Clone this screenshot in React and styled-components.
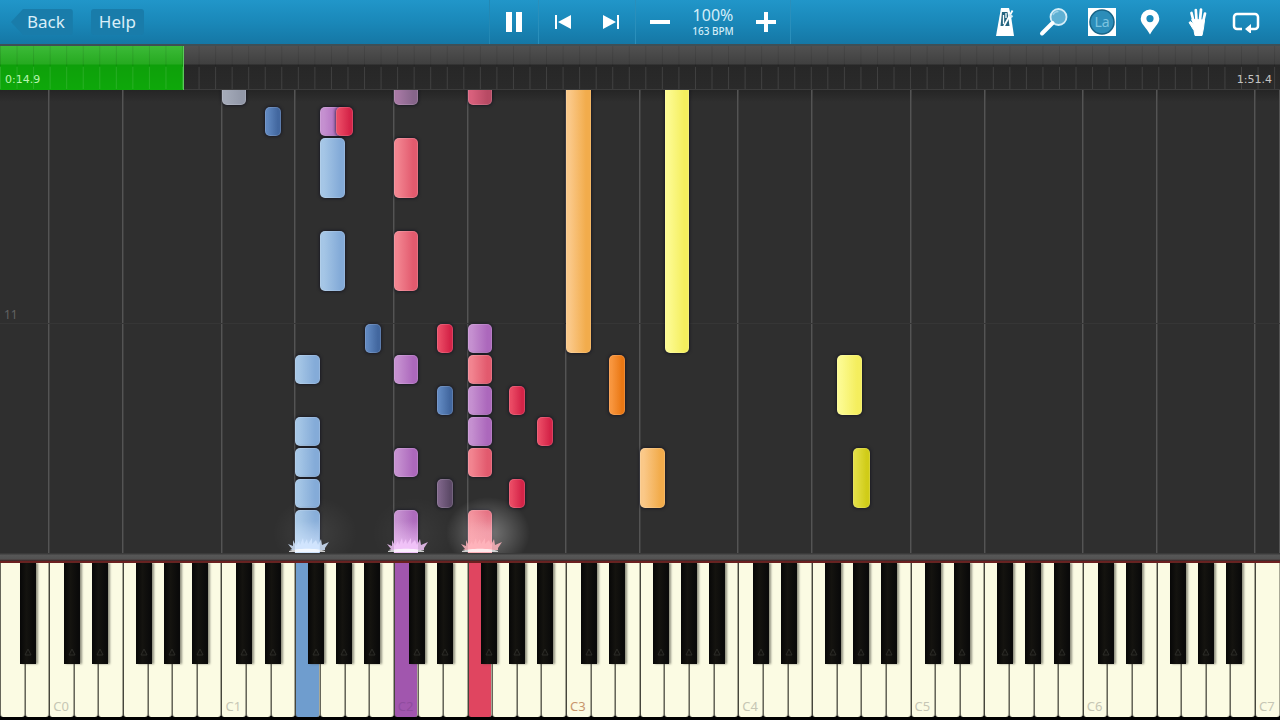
import styled, { createGlobalStyle, css } from 'styled-components';

const WHITE_KEYS = 52;
const STEP = 31;
const LEAD = 45;

// left edge of each note, in white key widths from the C of its octave
const pitchOffset = {
  C: 0,
  'C#': 0.6,
  D: 1,
  'D#': 1.75,
  E: 2,
  F: 3,
  'F#': 3.53,
  G: 4,
  'G#': 4.67,
  A: 5,
  'A#': 5.81,
  B: 6,
};

const noteColors = {
  blue: ['#a5c6e6', '#84abd8'],
  darkblue: ['#6088c0', '#42679f'],
  gray: ['#a3a9b8', '#9298a8'],
  purple: ['#c590d0', '#ac68bc'],
  mauve: ['#a678a4', '#86658a'],
  plum: ['#7d6488', '#5d4a68'],
  pink: ['#f28490', '#e25a6e'],
  rose: ['#d8607c', '#b84a64'],
  red: ['#ea4a64', '#d42448'],
  orange: ['#fac888', '#f2ac4c'],
  darkorange: ['#f8963e', '#ea7814'],
  yellow: ['#fcfa90', '#f4ee5e'],
  olive: ['#e2de44', '#d0cc18'],
};

const notes = [
  { pitch: 'C1', step: 13, length: 1, color: 'gray' },
  { pitch: 'C2', step: 13, length: 1, color: 'mauve' },
  { pitch: 'F2', step: 13, length: 1, color: 'rose' },
  { pitch: 'D#1', step: 12, length: 1, color: 'darkblue' },
  { pitch: 'G1', step: 12, length: 1, color: 'purple' },
  { pitch: 'G#1', step: 12, length: 1, color: 'red' },
  { pitch: 'G1', step: 10, length: 2, color: 'blue' },
  { pitch: 'C2', step: 10, length: 2, color: 'pink' },
  { pitch: 'G1', step: 7, length: 2, color: 'blue' },
  { pitch: 'C2', step: 7, length: 2, color: 'pink' },
  { pitch: 'C3', step: 5, length: 12, color: 'orange' },
  { pitch: 'G3', step: 5, length: 12, color: 'yellow' },
  { pitch: 'A#1', step: 5, length: 1, color: 'darkblue' },
  { pitch: 'D#2', step: 5, length: 1, color: 'red' },
  { pitch: 'F2', step: 5, length: 1, color: 'purple' },
  { pitch: 'F1', step: 4, length: 1, color: 'blue' },
  { pitch: 'C2', step: 4, length: 1, color: 'purple' },
  { pitch: 'F2', step: 4, length: 1, color: 'pink' },
  { pitch: 'D#3', step: 3, length: 2, color: 'darkorange' },
  { pitch: 'G4', step: 3, length: 2, color: 'yellow' },
  { pitch: 'D#2', step: 3, length: 1, color: 'darkblue' },
  { pitch: 'F2', step: 3, length: 1, color: 'purple' },
  { pitch: 'G#2', step: 3, length: 1, color: 'red' },
  { pitch: 'F1', step: 2, length: 1, color: 'blue' },
  { pitch: 'F2', step: 2, length: 1, color: 'purple' },
  { pitch: 'A#2', step: 2, length: 1, color: 'red' },
  { pitch: 'F1', step: 1, length: 1, color: 'blue' },
  { pitch: 'C2', step: 1, length: 1, color: 'purple' },
  { pitch: 'F2', step: 1, length: 1, color: 'pink' },
  { pitch: 'F3', step: 0, length: 2, color: 'orange' },
  { pitch: 'G#4', step: 0, length: 2, color: 'olive' },
  { pitch: 'F1', step: 0, length: 1, color: 'blue' },
  { pitch: 'D#2', step: 0, length: 1, color: 'plum' },
  { pitch: 'G#2', step: 0, length: 1, color: 'red' },
  { pitch: 'F1', step: -2, length: 2, color: 'blue' },
  { pitch: 'C2', step: -2, length: 2, color: 'purple' },
  { pitch: 'F2', step: -2, length: 2, color: 'pink' },
];

const pressed = { F1: '#6f9dce', C2: '#a156ae', F2: '#e04560' };

const sparks = [
  { pitch: 'F1', color: '#d3e6ff', glow: 0.08 },
  { pitch: 'C2', color: '#f3c6fa', glow: 0.05 },
  { pitch: 'F2', color: '#ffb4bc', glow: 0.36 },
];

// A and B before the first C, then seven octaves, then the last C
const whiteKeys = ['A-1', 'B-1'];
for (let octave = 0; octave < 7; octave++) {
  for (const name of 'CDEFGAB') whiteKeys.push(name + octave);
}
whiteKeys.push('C7');

// guide lines fall on every C and F
const lanes = [2];
for (let octave = 0; octave < 7; octave++) lanes.push(3, 4);
lanes.push(1);

const splitPitch = (pitch) => {
  const [, name, octave] = pitch.match(/^([A-G]#?)(-?\d)$/);
  return { name, octave: Number(octave) };
};

const keyPercent = (pitch) => {
  const { name, octave } = splitPitch(pitch);
  return ((2 + octave * 7 + pitchOffset[name]) / WHITE_KEYS) * 100;
};

const labelColor = ({ $middle, $pressed }) => {
  if ($pressed) return '#8f4c9e';
  return $middle ? '#c8966c' : '#c6c6b4';
};

const GlobalStyle = createGlobalStyle`
  * {
    box-sizing: border-box;
  }
  body {
    margin: 0;
    background: #000;
    font-family: 'Noto Sans', 'Open Sans', sans-serif;
  }
  button {
    margin: 0;
    padding: 0;
    border: none;
    background: none;
    font: inherit;
    color: inherit;
    cursor: pointer;
  }
`;

const Page = styled.div`
  display: flex;
  flex-direction: column;
  height: 100vh;
  overflow: hidden;
`;

const Toolbar = styled.header`
  display: grid;
  grid-template-columns: 1fr auto 1fr;
  height: 44px;
  flex-shrink: 0;
  color: #fff;
  background: linear-gradient(#2196c9, #1a88b9 50%, #1577a5);
`;

const MenuGroup = styled.nav`
  display: flex;
  align-items: center;
  gap: 18px;
  padding-left: 11px;
`;

const MenuButton = styled.button`
  height: 26px;
  padding: 0 8px;
  border-radius: 3px;
  font-size: 17px;
  line-height: 26px;
  color: #d9eef8;
  background: #197caa;
  ${(props) =>
    props.$back &&
    css`
      padding-left: 16px;
      clip-path: polygon(0 50%, 12px 0, 100% 0, 100% 100%, 12px 100%);
    `}
`;

const Transport = styled.div`
  display: flex;
  border-left: 1px solid #2388b4;
`;

const TransportGroup = styled.div`
  display: flex;
  align-items: center;
  border-right: 1px solid #2a8fbb;
`;

const IconButton = styled.button`
  display: flex;
  align-items: center;
  justify-content: center;
  width: 48px;
  height: 44px;
`;

const Tempo = styled.div`
  display: flex;
  flex-direction: column;
  width: 58px;
  text-align: center;
  color: #d3edf8;
`;

const TempoPercent = styled.div`
  font-size: 16px;
  line-height: 22px;
  margin-top: -4px;
`;

const TempoBpm = styled.div`
  font-size: 10px;
  line-height: 10px;
  font-weight: 500;
`;

const Tools = styled.div`
  display: flex;
  justify-content: flex-end;
  padding-right: 10px;
`;

const Timeline = styled.div`
  position: relative;
  display: flex;
  justify-content: space-between;
  align-items: flex-end;
  height: 46px;
  flex-shrink: 0;
  padding: 0 8px 2px 5px;
  border-top: 2px solid #3f4f55;
  border-bottom: 1px solid #3c3c3c;
  background: linear-gradient(#515151, #404040 18px, #272727 19px, #2a2a2a);
`;

const Progress = styled.div`
  position: absolute;
  inset: 0 auto -1px 0;
  border-right: 1px solid #5cc85c;
  background: linear-gradient(#3cba38, #26aa20 18px, #0ea00a 19px, #0ea80a);
`;

const Measures = styled.div`
  position: absolute;
  inset: 0;
  background:
    linear-gradient(90deg, rgba(255, 255, 255, 0.11) 1px, transparent 1px) 0 100% / calc(100% / 77.3) 22px repeat-x,
    linear-gradient(90deg, rgba(0, 0, 0, 0.1) 1px, transparent 1px) 0 0 / calc(100% / 77.3) 20px repeat-x;
`;

const Time = styled.span`
  position: relative;
  font-family: 'DejaVu Sans', sans-serif;
  font-size: 11px;
  line-height: 14px;
  color: ${(props) => props.$color};
`;

const Roll = styled.main`
  position: relative;
  display: flex;
  flex: 1;
  min-height: 0;
  overflow: hidden;
  background: linear-gradient(#252525, #2f2f2f 12px);
`;

const Lane = styled.div`
  flex: ${(props) => props.$keys} 0 0;
  box-shadow:
    inset -1px 0 0 #545454,
    1px 0 0 #3f3f3f;
`;

const BarLine = styled.div`
  position: absolute;
  left: 0;
  right: 0;
  bottom: 229px;
  padding-left: 4px;
  border-bottom: 1px solid #363636;
  font-size: 12px;
  line-height: 16px;
  color: #626262;
`;

const Note = styled.div`
  position: absolute;
  width: calc(100% / 52 * ${(props) => (props.$sharp ? 0.66 : 1)});
  border-radius: ${(props) => (props.$held ? '5px 5px 0 0' : '5px')};
  border: 1px solid rgba(255, 255, 255, 0.14);
  background: linear-gradient(
    90deg,
    ${(props) => noteColors[props.$color][0]} 15%,
    ${(props) => noteColors[props.$color][1]} 80%
  );
  background-origin: border-box;
  box-shadow: 0 0 3px 1px rgba(15, 15, 30, 0.6);
`;

const Spark = styled.svg`
  position: absolute;
  bottom: 0;
  width: 100px;
  height: 70px;
  margin-left: -38px;
`;

const Rail = styled.div`
  height: 8px;
  flex-shrink: 0;
  background: linear-gradient(#3a3a3a 1px, #575757 2px, #525252 6px, #3b2020);
`;

const Keyboard = styled.div`
  display: flex;
  height: 159px;
  flex-shrink: 0;
  padding-bottom: 3px;
  border-top: 2px solid #6c2020;
  background: #000;
`;

const KeySlot = styled.div`
  position: relative;
  flex: 1 0 0;
  min-width: 0;
`;

const WhiteKey = styled.button`
  display: flex;
  align-items: flex-end;
  width: 100%;
  height: 100%;
  padding: 0 0 2px 3px;
  border-left: 1px solid ${(props) => (props.$guide ? '#45453c' : '#66665a')};
  border-right: 1px solid #a8a896;
  border-radius: 0 0 3px 3px;
  font-size: 13px;
  line-height: 18px;
  color: ${labelColor};
  background: ${(props) => props.$pressed || '#fbfbe3'};
`;

const BlackKey = styled.button`
  display: flex;
  align-items: flex-end;
  justify-content: center;
  position: absolute;
  z-index: 1;
  top: 0;
  left: ${(props) => props.$left}%;
  width: 65%;
  height: 101px;
  padding-bottom: 8px;
  background: linear-gradient(90deg, #070707, #14130f 40%, #0a0a0a 90%);
  box-shadow: 2px 0 2px rgba(60, 60, 50, 0.55);
`;

function KeyMark() {
  return (
    <svg width="8" height="8" viewBox="0 0 8 8" fill="none" stroke="#2c2c28">
      <path d="M4 1l3 6H1z" />
    </svg>
  );
}

function PauseIcon() {
  return (
    <svg width="18" height="20" viewBox="0 0 18 20" fill="#fff">
      <path d="M1 0h6v20H1zM11 0h6v20h-6z" />
    </svg>
  );
}

function SkipIcon({ forward }) {
  return (
    <svg width="18" height="14" viewBox="0 0 18 14" fill="#fff">
      <path d={forward ? 'M1 0l13 7-13 7zM15 0h2v14h-2z' : 'M17 0L4 7l13 7zM1 0h2v14H1z'} />
    </svg>
  );
}

function MinusIcon() {
  return (
    <svg width="20" height="20" viewBox="0 0 20 20" fill="#fff">
      <path d="M0 8h20v4H0z" />
    </svg>
  );
}

function PlusIcon() {
  return (
    <svg width="20" height="20" viewBox="0 0 20 20" fill="#fff">
      <path d="M8 0h4v8h8v4h-8v8H8v-8H0V8h8z" />
    </svg>
  );
}

function MetronomeIcon() {
  return (
    <svg width="22" height="30" viewBox="0 0 22 30">
      <path d="M6 1h8l2 8 3 20H1z" fill="#fff" />
      <path d="M7 5h5.500l2 14H5.500z" fill="#25647f" />
      <path d="M8.500 8v9M11 6v5" stroke="#fff" strokeWidth="1.300" />
      <path d="M9 19L17.500 3.500" stroke="#fff" strokeWidth="1.800" />
      <path d="M13.500 7.500l4 2.500" stroke="#d8eef7" strokeWidth="2.500" />
    </svg>
  );
}

function MagnifierIcon() {
  return (
    <svg width="30" height="30" viewBox="0 0 30 30">
      <circle cx="19.500" cy="10" r="8" fill="#5fb0d3" stroke="#d5edf7" strokeWidth="1.800" />
      <path d="M13.500 16L3 26.500" stroke="#fff" strokeWidth="4" strokeLinecap="round" />
      <path d="M14 8c1-2.500 3-3.500 5.500-3.500" fill="none" stroke="#9dd2e8" strokeWidth="1.500" />
    </svg>
  );
}

function NoteNamesIcon() {
  return (
    <svg width="30" height="30" viewBox="0 0 30 30">
      <path d="M1 1h28v28H1z" fill="#fff" />
      <circle cx="15" cy="15" r="12" fill="#2c8db9" stroke="#176487" strokeWidth="1.500" />
      <text x="15" y="20" textAnchor="middle" fontSize="14" fill="#7cc4e0">
        La
      </text>
    </svg>
  );
}

function PinIcon() {
  return (
    <svg width="22" height="28" viewBox="0 0 22 28">
      <path
        d="M11 1.500a9.300 9.300 0 0 1 9.300 9.300c0 5.200-6 9.200-9.300 15.700C7.700 20 1.700 16 1.700 10.800A9.300 9.300 0 0 1 11 1.500zM11 7a3.600 3.600 0 1 0 0 7.200A3.600 3.600 0 0 0 11 7z"
        fill="#fff"
        fillRule="evenodd"
      />
    </svg>
  );
}

function HandIcon() {
  return (
    <svg width="24" height="30" viewBox="0 0 24 30" fill="none" stroke="#fff" strokeLinecap="round">
      <path d="M7.500 14L5.500 6M10.500 13L9.800 3M14 13l1-10.500M17 15l2-8.500" strokeWidth="2.700" />
      <path
        d="M6 12.500l12.500 0.500-1 8-1.500 7.500H9l-1-5-5-8 1.500-1 3 3z"
        fill="#fff"
        strokeWidth="1"
        strokeLinejoin="round"
      />
    </svg>
  );
}

function LoopIcon() {
  return (
    <svg width="28" height="22" viewBox="0 0 28 22">
      <path
        d="M10 18H5a3 3 0 0 1-3-3V6a3 3 0 0 1 3-3h18a3 3 0 0 1 3 3v9a3 3 0 0 1-3 3h-4"
        fill="none"
        stroke="#fff"
        strokeWidth="2.500"
      />
      <path d="M13 18l6-5v10z" fill="#fff" />
    </svg>
  );
}

const tools = [
  { label: 'Metronome', icon: MetronomeIcon },
  { label: 'Zoom', icon: MagnifierIcon },
  { label: 'Note names', icon: NoteNamesIcon },
  { label: 'Bookmark', icon: PinIcon },
  { label: 'Hands', icon: HandIcon },
  { label: 'Loop', icon: LoopIcon },
];

function KeySpark({ pitch, color, glow }) {
  return (
    <Spark viewBox="0 0 100 70" style={{ left: `${keyPercent(pitch)}%` }}>
      <defs>
        <radialGradient id={`glow-${pitch}`}>
          <stop offset="0" stopColor="#fff" stopOpacity={glow} />
          <stop offset="1" stopColor="#fff" stopOpacity="0" />
        </radialGradient>
        <linearGradient id={`fade-${pitch}`} x1="0" y1="0" x2="0" y2="1">
          <stop offset="0" stopColor={color} stopOpacity="0" />
          <stop offset="1" stopColor={color} stopOpacity="0.9" />
        </linearGradient>
      </defs>
      <ellipse cx="58" cy="50" rx="42" ry="36" fill={`url(#glow-${pitch})`} />
      <path d="M38 38h24v32H38z" fill={`url(#fade-${pitch})`} />
      <path
        d="M31 68l4-2-4-5 5 2 0-6 3 6 3-5 1 4 3-7 1 6 3-5 1 5 4-6 0 6 4-4 2 5 3-6 1 6 7-3-4 6v2H33z"
        fill={color}
        opacity="0.85"
      />
      <path d="M32 68c8-3 28-3 36 0v1H32z" fill="#fff" opacity="0.75" />
    </Spark>
  );
}

export default function App() {
  return (
    <Page>
      <GlobalStyle />
      <Toolbar>
        <MenuGroup>
          <MenuButton $back>Back</MenuButton>
          <MenuButton>Help</MenuButton>
        </MenuGroup>
        <Transport>
          <TransportGroup>
            <IconButton aria-label="Pause">
              <PauseIcon />
            </IconButton>
          </TransportGroup>
          <TransportGroup>
            <IconButton aria-label="Previous">
              <SkipIcon />
            </IconButton>
            <IconButton aria-label="Next">
              <SkipIcon forward />
            </IconButton>
          </TransportGroup>
          <TransportGroup>
            <IconButton aria-label="Slower">
              <MinusIcon />
            </IconButton>
            <Tempo>
              <TempoPercent>100%</TempoPercent>
              <TempoBpm>163 BPM</TempoBpm>
            </Tempo>
            <IconButton aria-label="Faster">
              <PlusIcon />
            </IconButton>
          </TransportGroup>
        </Transport>
        <Tools>
          {tools.map(({ label, icon: Icon }) => (
            <IconButton key={label} aria-label={label}>
              <Icon />
            </IconButton>
          ))}
        </Tools>
      </Toolbar>

      <Timeline>
        <Progress style={{ width: '14.4%' }} />
        <Measures />
        <Time $color="#b9f5b0">0:14.9</Time>
        <Time $color="#c4c4c4">1:51.4</Time>
      </Timeline>

      <Roll>
        {lanes.map((keys, i) => (
          <Lane key={i} $keys={keys} />
        ))}
        <BarLine>11</BarLine>
        {notes.map((note) => {
          // notes that are already sounding are cut at the rail
          const bottom = Math.max(0, LEAD + note.step * STEP);
          const top = LEAD + (note.step + note.length) * STEP - 2;
          return (
            <Note
              key={`${note.pitch}-${note.step}`}
              $color={note.color}
              $sharp={note.pitch.includes('#')}
              $held={bottom === 0}
              style={{ left: `${keyPercent(note.pitch)}%`, bottom, height: top - bottom }}
            />
          );
        })}
        {sparks.map((spark) => (
          <KeySpark key={spark.pitch} {...spark} />
        ))}
      </Roll>

      <Rail />
      <Keyboard>
        {whiteKeys.map((key) => {
          const { name, octave } = splitPitch(key);
          const sharp = pitchOffset[`${name}#`];
          return (
            <KeySlot key={key}>
              <WhiteKey
                aria-label={key}
                $guide={name === 'C' || name === 'F'}
                $middle={key === 'C3'}
                $pressed={pressed[key]}
              >
                {name === 'C' && key}
              </WhiteKey>
              {sharp && octave < 7 && (
                <BlackKey aria-label={`${name}#${octave}`} $left={(sharp - pitchOffset[name]) * 100}>
                  <KeyMark />
                </BlackKey>
              )}
            </KeySlot>
          );
        })}
      </Keyboard>
    </Page>
  );
}
